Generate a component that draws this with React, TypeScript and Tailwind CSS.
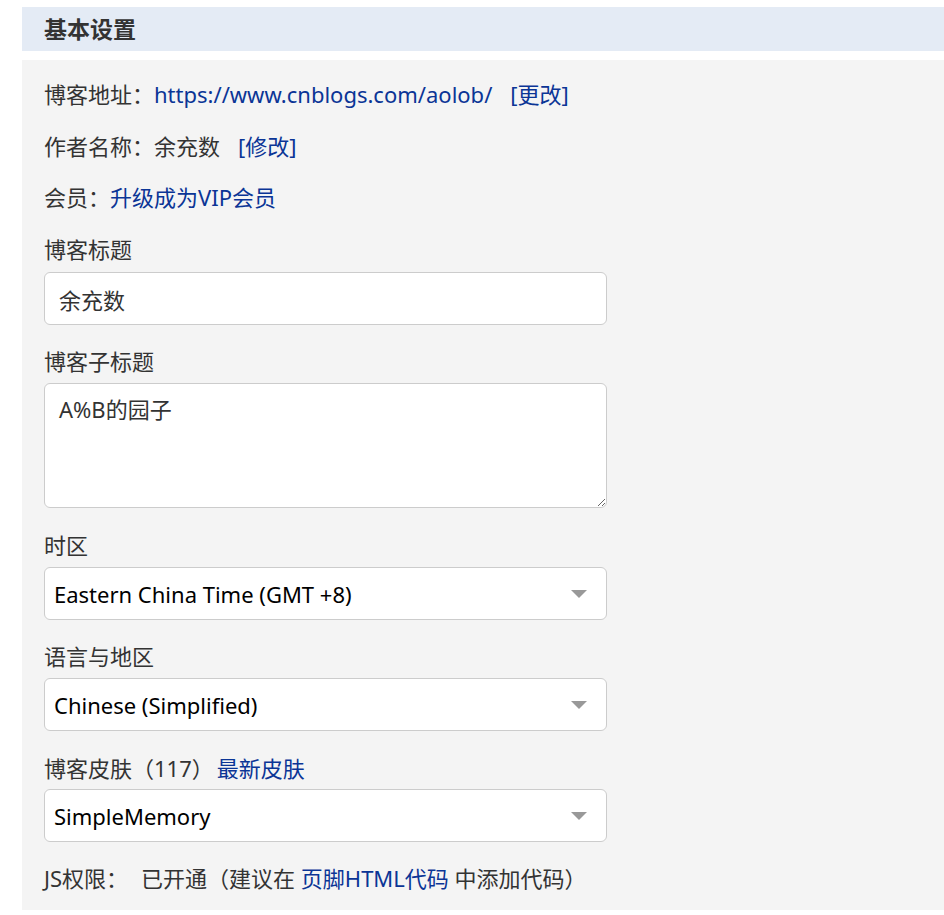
import { useState } from 'react';

const font = "font-['Noto_Sans','Noto_Sans_CJK_SC',sans-serif]";

const Caret = () => (
  <svg width="16" height="8" viewBox="0 0 16 8" className="absolute right-[20px] top-1/2 -translate-y-1/2 pointer-events-none">
    <path d="M0 0 H16 L8 8 Z" fill="#999" />
  </svg>
);

const SelectBox = ({ value, options }: { value: string; options: string[] }) => {
  const [v, setV] = useState(value);
  return (
    <div className="relative w-[563px] h-[53px]">
      <select
        value={v}
        onChange={(e) => setV(e.target.value)}
        className="appearance-none w-full h-full bg-white border border-[#cccccc] rounded-[6px] pl-[9px] pr-10 text-[22px] text-black outline-none"
      >
        {options.map((o) => (
          <option key={o}>{o}</option>
        ))}
      </select>
      <Caret />
    </div>
  );
};

export default function App() {
  const [title, setTitle] = useState('余充数');
  const [subtitle, setSubtitle] = useState('A%B的园子');

  return (
    <div className={`${font} bg-white min-h-[915px] pt-[7px] pl-[22px] text-[#333] text-[22px] leading-[30px]`}>
      {/* 标题栏 */}
      <div className="h-[44px] bg-[#e4ebf5] flex items-center pl-[22px]">
        <span className="font-bold text-[23px] text-[#333] -mt-[1px]">基本设置</span>
      </div>

      {/* 设置内容 */}
      <div className="mt-[9px] bg-[#f4f4f4] min-h-[850px] pt-[19px] pl-[22px] flex flex-col">
        <div>
          博客地址：<a href="#" className="text-[#0b3596]">https://www.cnblogs.com/aolob/</a>
          <a href="#" className="text-[#0b3596] ml-[18px]">[更改]</a>
        </div>
        <div className="mt-[22px]">
          作者名称：余充数
          <a href="#" className="text-[#0b3596] ml-[18px]">[修改]</a>
        </div>
        <div className="mt-[21px]">
          会员：<a href="#" className="text-[#0b3596]">升级成为VIP会员</a>
        </div>

        <div className="mt-[22px]">博客标题</div>
        <input
          value={title}
          onChange={(e) => setTitle(e.target.value)}
          className="mt-[8px] w-[563px] h-[53px] bg-white border border-[#cccccc] rounded-[6px] px-[14px] text-[22px] text-[#333] outline-none"
        />

        <div className="mt-[21px]">博客子标题</div>
        <textarea
          value={subtitle}
          onChange={(e) => setSubtitle(e.target.value)}
          className="mt-[7px] w-[563px] h-[125px] bg-white border border-[#cccccc] rounded-[6px] px-[14px] py-[10px] text-[22px] leading-[30px] text-[#333] outline-none"
        />

        <div className="mt-[22px]">时区</div>
        <div className="mt-[7px]">
          <SelectBox value="Eastern China Time (GMT +8)" options={['Eastern China Time (GMT +8)']} />
        </div>

        <div className="mt-[21px]">语言与地区</div>
        <div className="mt-[7px]">
          <SelectBox value="Chinese (Simplified)" options={['Chinese (Simplified)']} />
        </div>

        <div className="mt-[22px]">
          博客皮肤（117）<a href="#" className="text-[#0b3596] ml-[3px]">最新皮肤</a>
        </div>
        <div className="mt-[6px]">
          <SelectBox value="SimpleMemory" options={['SimpleMemory']} />
        </div>

        <div className="mt-[21px]">
          JS权限：<span className="ml-[13px]">已开通（建议在 </span>
          <a href="#" className="text-[#0b3596]">页脚HTML代码</a> 中添加代码）
        </div>
      </div>
    </div>
  );
}
